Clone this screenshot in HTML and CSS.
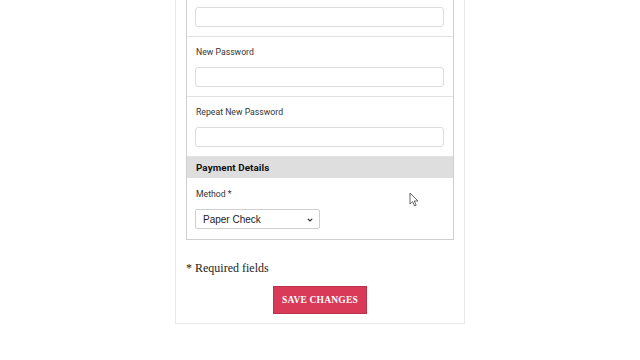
FILE: index.html
```html
<!DOCTYPE html>
<html lang="en">
<head>
  <meta charset="UTF-8"/>
  <meta name="viewport" content="width=device-width, initial-scale=1"/>
  <title>Account Settings</title>
  <link rel="stylesheet" href="styles.css">
</head>
<body>
  <div class="card">
    <div class="fieldset">
      <!-- Password -->
      <div class="field">
        <label class="field-label">Current Password</label>
        <input type="password" class="text-input">
      </div>
      <div class="field">
        <label class="field-label">New Password</label>
        <input type="password" class="text-input">
      </div>
      <div class="field">
        <label class="field-label">Repeat New Password</label>
        <input type="password" class="text-input">
      </div>

      <!-- Payment -->
      <div class="section-head">Payment Details</div>
      <div class="field field-last">
        <label class="field-label">Method *</label>
        <div class="select-wrap">
          <select class="select-input">
            <option>Paper Check</option>
            <option>Direct Deposit</option>
          </select>
          <svg class="select-arrow" width="6" height="4" viewBox="0 0 6 4">
            <path d="M0.8 0.8 L3 3 L5.2 0.8" fill="none" stroke="#333" stroke-width="1.2"/>
          </svg>
        </div>
      </div>
    </div>

    <p class="required">* Required fields</p>
    <div class="btn-row">
      <button class="save-btn">Save Changes</button>
    </div>
  </div>

  <svg class="cursor" width="12" height="16" viewBox="0 0 12 16">
    <path d="M1 1 L1 12 L3.6 9.6 L5.6 14 L7.2 13.3 L5.3 9 L9 9 Z" fill="#fff" stroke="#555" stroke-width="0.9"/>
  </svg>
</body>
</html>
```

FILE: styles.css
```css
:root {
  --border-color: #dcdcdc;
  --line-color: #e2e2e2;
  --text-color: #333;
  --accent: #d93a58;
}

body {
  margin: 0;
  background-color: #fff;
  color: var(--text-color);
}

.card {
  width: 290px;
  box-sizing: border-box;
  margin: -35px auto 0;
  padding: 10px 10px 9px;
  border: 1px solid #e8e8e8;
}

.fieldset {
  border: 1px solid #cfcfcf;
  font-family: Roboto, "Noto Sans", sans-serif;
}

.field {
  display: flex;
  flex-direction: column;
  padding: 8px 9px 9px 8px;
  border-bottom: 1px solid var(--line-color);
}

.field-last {
  border-bottom: none;
  padding: 9px 9px 10px 8px;
}

.field-label {
  font-size: 8.7px;
  line-height: 12px;
  margin: 1px 0 9px 1px;
  color: #333;
}

.text-input {
  height: 20px;
  box-sizing: border-box;
  border: 1px solid var(--border-color);
  border-radius: 3px;
  margin: 0;
  padding: 0 6px;
}

.section-head {
  background-color: #dedede;
  font-weight: bold;
  font-size: 9.8px;
  line-height: 21px;
  letter-spacing: 0.1px;
  padding: 0 9px;
  color: #111;
}

.select-wrap {
  position: relative;
  width: 125px;
}

.select-input {
  display: block;
  appearance: none;
  -webkit-appearance: none;
  width: 125px;
  height: 20px;
  box-sizing: border-box;
  border: 1px solid #cfcfcf;
  border-radius: 2px;
  background-color: #fff;
  font-family: "Liberation Sans", Arial, sans-serif;
  font-size: 10px;
  color: #222;
  padding: 0 7px;
  margin: 0;
}

.select-arrow {
  position: absolute;
  right: 7px;
  top: 9px;
}

.required {
  font-family: "Liberation Serif", "Times New Roman", serif;
  font-size: 12px;
  line-height: 16px;
  margin: 20px 0 0;
  color: #222;
}

.btn-row {
  display: flex;
  justify-content: center;
  margin-top: 10px;
}

.save-btn {
  width: 94px;
  height: 28px;
  background-color: var(--accent);
  border: 1px solid #b8324b;
  color: #fff;
  font-family: "Liberation Serif", "Times New Roman", serif;
  font-weight: bold;
  font-size: 9.5px;
  text-transform: uppercase;
  letter-spacing: 0.2px;
  cursor: pointer;
  padding: 0;
}

.cursor {
  position: absolute;
  left: 409px;
  top: 192px;
}
```
